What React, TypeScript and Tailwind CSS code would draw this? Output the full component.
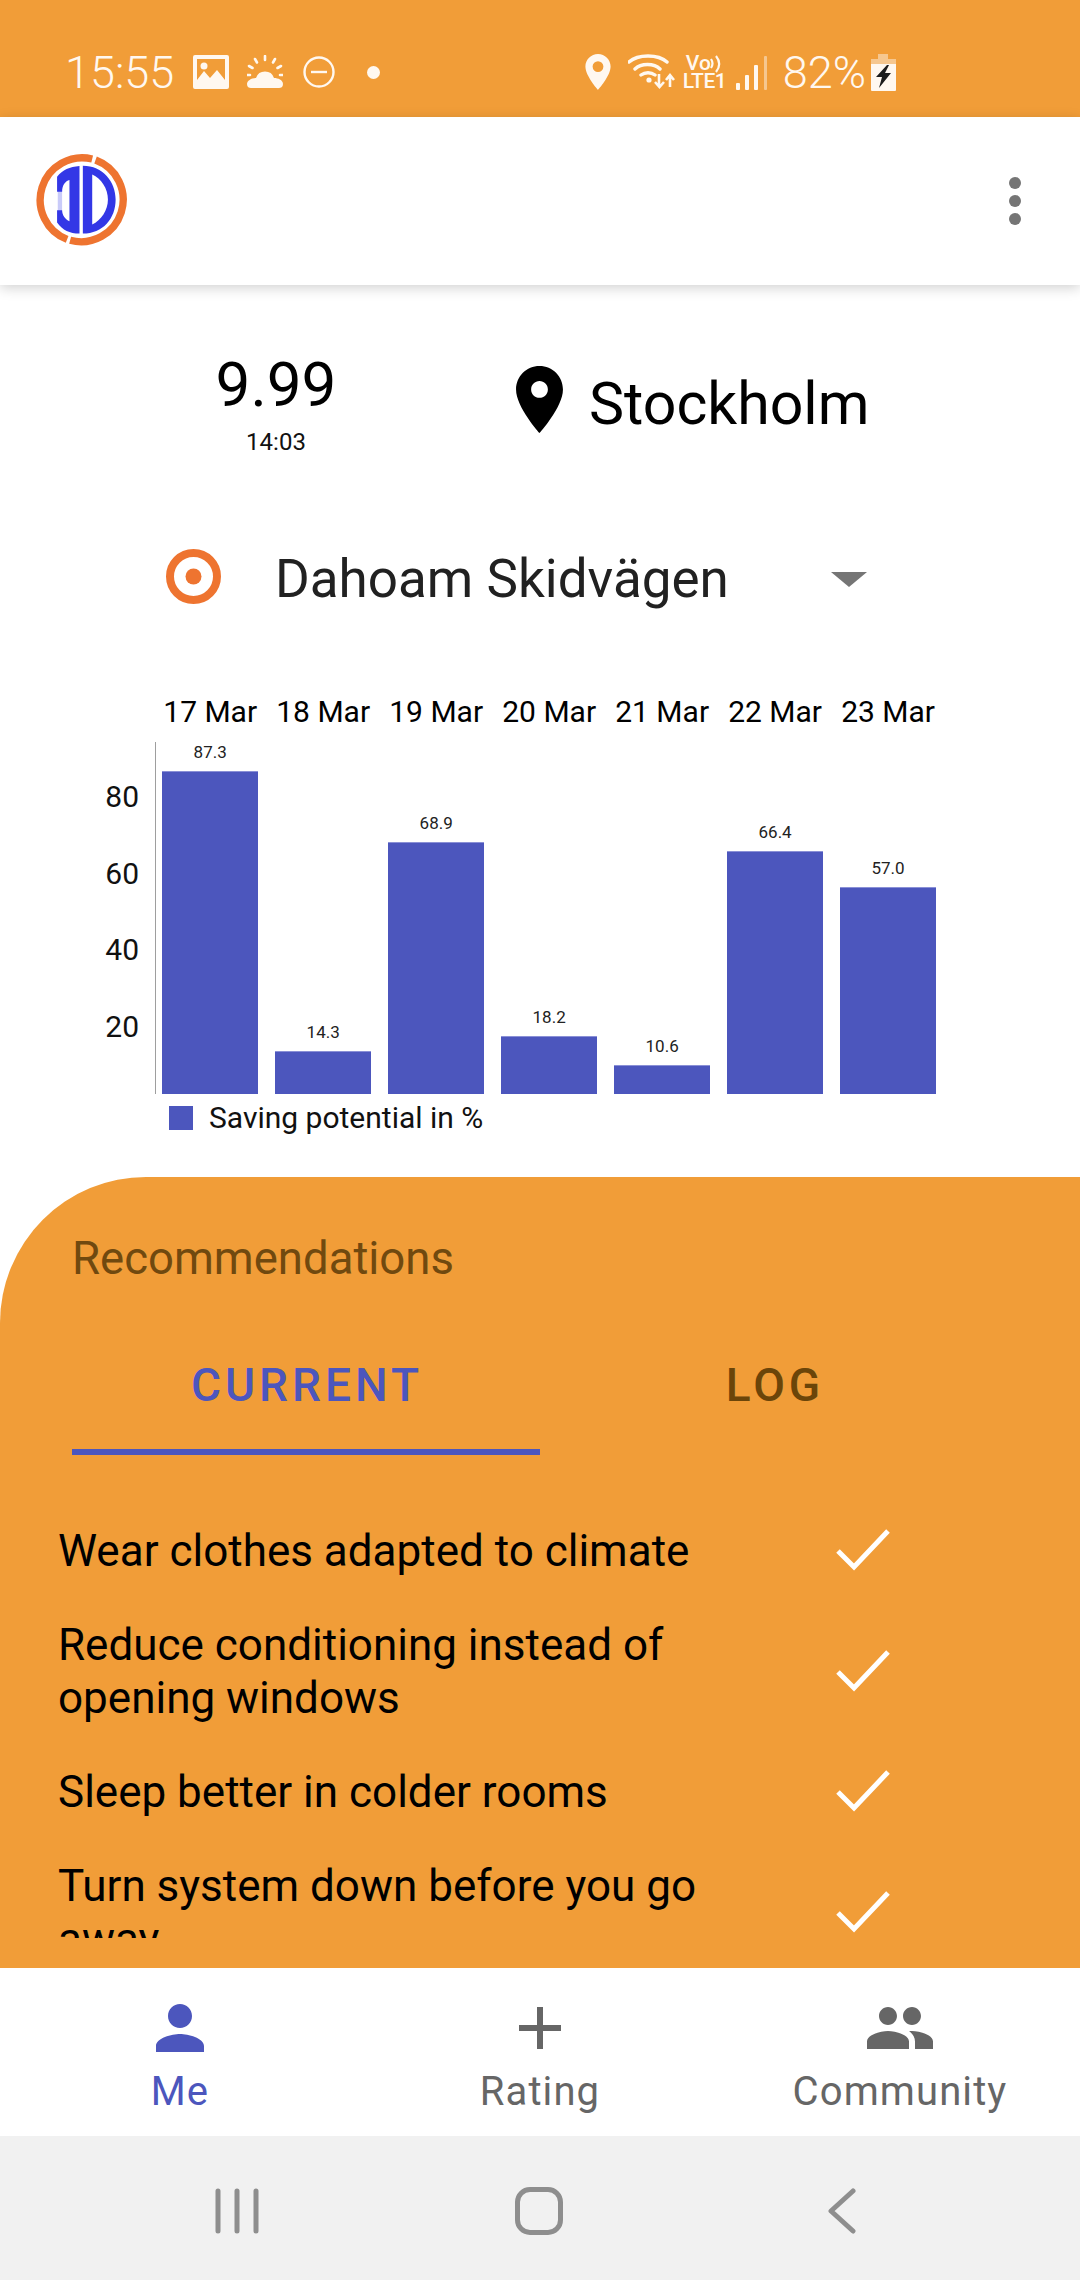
import React from 'react';

const bars = [
  { date: '17 Mar', value: 87.3 },
  { date: '18 Mar', value: 14.3 },
  { date: '19 Mar', value: 68.9 },
  { date: '20 Mar', value: 18.2 },
  { date: '21 Mar', value: 10.6 },
  { date: '22 Mar', value: 66.4 },
  { date: '23 Mar', value: 57.0 },
];

const ticks = [80, 60, 40, 20];

const recommendations = [
  'Wear clothes adapted to climate',
  'Reduce conditioning instead of opening windows',
  'Sleep better in colder rooms',
  'Turn system down before you go away',
];

const PIN =
  'M12 2C8.13 2 5 5.13 5 9c0 5.25 7 13 7 13s7-7.75 7-13c0-3.87-3.13-7-7-7zm0 9.5c-1.38 0-2.5-1.12-2.5-2.5s1.12-2.5 2.5-2.5 2.5 1.12 2.5 2.5-1.12 2.5-2.5 2.5z';

function StatusBar() {
  return (
    <div className="h-[117px] shrink-0 bg-[#f19d38] pt-[54px] pl-[65px] pr-[184px]">
      <div className="flex h-[36px] items-center text-[#fff8f0]">
        <span className="w-[109px] text-[45px] leading-none font-[350]">15:55</span>
        {/* gallery */}
        <svg className="ml-[19px]" width="36" height="34" viewBox="0 0 36 34">
          <path
            fillRule="evenodd"
            fill="currentColor"
            d="M2 0h32a2 2 0 0 1 2 2v30a2 2 0 0 1-2 2H2a2 2 0 0 1-2-2V2a2 2 0 0 1 2-2zM4 25l7-9 6 7 7-8 8 10V4H4z"
          />
          <circle cx="11" cy="11" r="3.5" fill="currentColor" />
        </svg>
        {/* weather */}
        <svg className="ml-[18px]" width="36" height="34" viewBox="0 0 36 34">
          <path
            fill="currentColor"
            d="M9 23a9.5 9.5 0 0 1 18 0c4 0 9 2 9 6 0 3-2 4-4 4H4c-2 0-4-1-4-4 0-3 4-6 9-6z"
          />
          <path
            stroke="currentColor"
            strokeWidth="2.6"
            strokeLinecap="round"
            d="M18 1v4M8 4l2 3.5M28 4l-2 3.5M2 11l3.5 2M34 11l-3.5 2M0 20h3M33 20h3"
          />
        </svg>
        {/* do not disturb */}
        <svg className="ml-[20px]" width="32" height="32" viewBox="0 0 32 32" fill="none" stroke="currentColor" strokeWidth="2.4">
          <circle cx="16" cy="16" r="14.5" />
          <path d="M8 16h16" />
        </svg>
        <span className="ml-[32px] h-[13px] w-[13px] rounded-full bg-[#fff8f0]" />

        <div className="ml-auto flex items-center">
          <svg width="28" height="36" viewBox="5 2 14 20" fill="currentColor">
            <path fillRule="evenodd" d="M12 2C8.13 2 5 5.13 5 9c0 5.25 7 13 7 13s7-7.75 7-13c0-3.87-3.13-7-7-7zm0 10a3 3 0 1 1 0-6 3 3 0 0 1 0 6z" />
          </svg>
          {/* wifi with arrows */}
          <svg className="ml-[16px]" width="48" height="36" viewBox="0 0 48 36" fill="none" stroke="currentColor">
            <path strokeWidth="3.4" strokeLinecap="round" d="M1 8C10 0 30 0 39 8M7 15C13 9 26 9 32 15M13 21C17 18 23 18 27 21" />
            <circle cx="21" cy="26" r="2.6" fill="currentColor" stroke="none" />
            <path strokeWidth="2.6" d="M31 20V33M27 28l4.5 5 4.5-5" />
            <path strokeWidth="2.6" d="M42 33V22M38 26l4-5 4 5" />
          </svg>
          {/* volte */}
          <div className="relative ml-[7px] flex h-[36px] w-[44px] flex-col items-start">
            <span className="ml-[3px] h-[18px] text-[21px] leading-[18px] font-medium">Vo</span>
            <span className="h-[18px] text-[21px] leading-[18px] tracking-[-0.5px] font-medium">LTE1</span>
            <svg className="absolute top-0 left-[27px]" width="12" height="20" viewBox="0 0 12 20" fill="none" stroke="currentColor" strokeWidth="2.2">
              <path d="M1 5c2 3 2 6 0 9M6 2c4 5 4 11 0 16" />
            </svg>
          </div>
          {/* signal */}
          <svg className="ml-[9px]" width="31" height="36" viewBox="0 0 31 36">
            <rect x="0" y="29" width="4" height="7" rx="1" fill="#fff8f0" />
            <rect x="9" y="21" width="4" height="15" rx="1" fill="#fff8f0" />
            <rect x="18" y="11" width="4" height="25" rx="1" fill="#fff8f0" />
            <rect x="28" y="2" width="3" height="34" rx="1" fill="#f6c78f" />
          </svg>
          <span className="ml-[16px] text-[45px] leading-none font-[350]">82%</span>
          <svg className="ml-[5px]" width="25" height="37" viewBox="0 0 25 37">
            <path d="M7 0h10v5h8v5H0V5h7z" fill="#f6c78f" />
            <path d="M0 10h25v26a1 1 0 0 1-1 1H1a1 1 0 0 1-1-1z" fill="#fff8f0" />
            <path d="M16 11 5 23h6l-3 11 12-15h-6l4-8z" fill="#1c1c1c" />
          </svg>
        </div>
      </div>
    </div>
  );
}

function Logo() {
  return (
    <svg width="92" height="92" viewBox="47 57 275 275" fill="none">
      <path d="M218 72A126 126 0 0 0 143 312" stroke="#ee7430" strokeWidth="22" />
      <path d="M228 75A126 126 0 0 1 152 315" stroke="#ee7430" strokeWidth="22" />
      <path
        fill="#3337e6"
        fillRule="evenodd"
        d="M190 92C250 92 288 140 288 193C288 250 250 295 190 295ZM218 118V268C245 255 265 225 265 193C265 160 245 130 218 118Z"
      />
      <rect x="115" y="165" width="13" height="65" fill="#c9cbf9" />
      <path
        fill="#3337e6"
        d="M180 93V295C150 295 130 285 113 262V225H128C128 240 138 252 150 258V135C138 138 128 150 128 170H113V125C130 105 150 95 180 93Z"
      />
    </svg>
  );
}

function AppBar() {
  return (
    <div className="relative z-10 flex h-[168px] shrink-0 items-start justify-between bg-white pt-[37px] pl-[35px] pr-[59px] shadow-[0_3px_12px_rgba(0,0,0,0.18)]">
      <Logo />
      <div className="flex flex-col gap-[6px] pt-[23px]">
        <span className="h-[12px] w-[12px] rounded-full bg-[#757575]" />
        <span className="h-[12px] w-[12px] rounded-full bg-[#757575]" />
        <span className="h-[12px] w-[12px] rounded-full bg-[#757575]" />
      </div>
    </div>
  );
}

function Chart() {
  return (
    <div className="pl-[162px]">
      <div className="flex gap-[16.6px]">
        {bars.map((b) => (
          <div key={b.date} className="w-[96.4px] whitespace-nowrap text-center text-[30px] leading-[36px] text-black">
            {b.date}
          </div>
        ))}
      </div>
      <div className="mt-[12px] -ml-[162px] flex h-[352px]">
        <div className="flex w-[139px] flex-col items-end pt-[17px] text-[30px] text-[#111]">
          {ticks.map((t) => (
            <div key={t} className="flex h-[76.5px] items-center leading-none">
              {t}
            </div>
          ))}
        </div>
        <div className="ml-[16px] flex items-end gap-[16.6px] border-l border-[#9e9e9e] pl-[6px]">
          {bars.map((b) => (
            <div key={b.date} className="flex w-[96.4px] flex-col items-center">
              <span className="mb-[9px] text-[17px] leading-[20px] text-[#222]">{b.value.toFixed(1)}</span>
              {/* axis starts a little above zero, so bars are offset */}
              <div className="w-full border-t border-[#8a90d6] bg-[#4c56bd]" style={{ height: b.value * 3.825 - 11.2 }} />
            </div>
          ))}
        </div>
      </div>
      <div className="mt-[12px] flex items-center">
        <span className="ml-[7px] h-[24px] w-[24px] bg-[#4c56bd]" />
        <span className="ml-[16px] text-[30px] leading-[24px] text-[#111]">Saving potential in %</span>
      </div>
    </div>
  );
}

function Recommendations() {
  return (
    <div className="flex min-h-0 flex-1 flex-col rounded-tl-[146px] bg-[#f19d38]">
      <div className="pt-[57px] pl-[72px] text-[45.5px] leading-[50px] text-[#70490f]">Recommendations</div>
      <div className="mt-[76px] ml-[72px] flex">
        <div className="w-[468px] border-b-[6px] border-[#4c56bd] pb-[39px] pl-[2px] text-center text-[46px] leading-[50px] font-medium tracking-[4px] text-[#4c56bd]">
          CURRENT
        </div>
        <div className="w-[468px] pl-[2px] text-center text-[46px] leading-[50px] font-medium tracking-[4px] text-[#6b4509]">
          LOG
        </div>
      </div>
      <div className="mt-[49px] h-[434px] overflow-hidden">
        {recommendations.map((r) => (
          <div key={r} className="flex items-center pl-[58px]">
            <div className="w-[680px] py-[20.5px] text-[44px] leading-[53px] text-black">{r}</div>
            <svg className="mb-[2px] ml-[98px]" width="54" height="42" viewBox="0 0 54 42" fill="none" stroke="#fff" strokeWidth="5">
              <path d="M2 22l16 16L52 2" />
            </svg>
          </div>
        ))}
      </div>
    </div>
  );
}

function BottomTabs() {
  return (
    <div className="grid h-[168px] shrink-0 grid-cols-3 bg-white pt-[24px]">
      <div className="flex flex-col items-center text-[#4c56bd]">
        <svg width="72" height="72" viewBox="0 0 24 24" fill="currentColor">
          <path d="M12 12c2.21 0 4-1.79 4-4s-1.79-4-4-4-4 1.79-4 4 1.79 4 4 4zm0 2c-2.67 0-8 1.34-8 4v2h16v-2c0-2.66-5.33-4-8-4z" />
        </svg>
        <span className="text-[40px] leading-[56px] tracking-[1.1px]">Me</span>
      </div>
      <div className="flex flex-col items-center text-[#666]">
        <svg width="72" height="72" viewBox="0 0 24 24" fill="currentColor">
          <path d="M19 13h-6v6h-2v-6H5v-2h6V5h2v6h6v2z" />
        </svg>
        <span className="text-[40px] leading-[56px] tracking-[1.1px]">Rating</span>
      </div>
      <div className="flex flex-col items-center text-[#666]">
        <svg width="72" height="72" viewBox="0 0 24 24" fill="currentColor">
          <path d="M16 11c1.66 0 2.99-1.34 2.99-3S17.66 5 16 5c-1.66 0-3 1.34-3 3s1.34 3 3 3zm-8 0c1.66 0 2.99-1.34 2.99-3S9.66 5 8 5C6.34 5 5 6.34 5 8s1.34 3 3 3zm0 2c-2.33 0-7 1.17-7 3.5V19h14v-2.5c0-2.33-4.67-3.5-7-3.5zm8 0c-.29 0-.62.02-.97.05 1.16.84 1.97 1.97 1.97 3.45V19h6v-2.5c0-2.33-4.67-3.5-7-3.5z" />
        </svg>
        <span className="text-[40px] leading-[56px] tracking-[1.1px]">Community</span>
      </div>
    </div>
  );
}

function NavBar() {
  return (
    <div className="flex h-[144px] shrink-0 items-center bg-[#f1f1f1] pt-[6px] pl-[215px]">
      <svg width="44" height="46" viewBox="0 0 44 46" stroke="#8e8e8e" strokeWidth="5" strokeLinecap="round">
        <path d="M3 3v40M22 3v40M41 3v40" />
      </svg>
      <span className="ml-[256px] h-[48px] w-[48px] rounded-[15px] border-[5px] border-[#8e8e8e]" />
      <svg className="ml-[265px]" width="28" height="46" viewBox="0 0 28 46" fill="none" stroke="#8e8e8e" strokeWidth="5" strokeLinecap="round" strokeLinejoin="round">
        <path d="M25 3 3 23l22 20" />
      </svg>
    </div>
  );
}

export default function App() {
  return (
    <div className="flex h-[2280px] w-[1080px] flex-col overflow-hidden bg-white font-['Roboto',sans-serif]">
      <StatusBar />
      <AppBar />

      {/* temp + location */}
      <div className="flex pt-[64px]">
        <div className="ml-[176px] flex w-[200px] flex-col items-center">
          <span className="text-[62px] leading-[72px] text-black">9.99</span>
          <span className="mt-[8px] text-[24px] leading-[26px] text-[#111]">14:03</span>
        </div>
        <div className="ml-[140px] flex items-center self-start pt-[17px]">
          <svg className="mb-[8px]" width="47" height="67" viewBox="5 2 14 20" fill="#000">
            <path d={PIN} fillRule="evenodd" />
          </svg>
          <span className="ml-[26px] text-[59px] leading-[68px] text-black">Stockholm</span>
        </div>
      </div>

      {/* home select */}
      <div className="mt-[94px] flex items-center pl-[166px]">
        <svg className="mb-[5px]" width="55" height="55" viewBox="0 0 55 55">
          <circle cx="27.5" cy="27.5" r="23.5" fill="none" stroke="#ee7430" strokeWidth="8" />
          <circle cx="27.5" cy="27.5" r="8" fill="#ee7430" />
        </svg>
        <span className="ml-[54px] w-[556px] text-[53px] leading-[60px] text-[#212121]">Dahoam Skidvägen</span>
        <svg width="36" height="15" viewBox="0 0 36 15" fill="#757575">
          <path d="M0 0h36L18 15z" />
        </svg>
      </div>

      <div className="mt-[85px]">
        <Chart />
      </div>

      <div className="mt-[47px] flex min-h-0 flex-1 flex-col">
        <Recommendations />
      </div>

      <BottomTabs />
      <NavBar />
    </div>
  );
}
